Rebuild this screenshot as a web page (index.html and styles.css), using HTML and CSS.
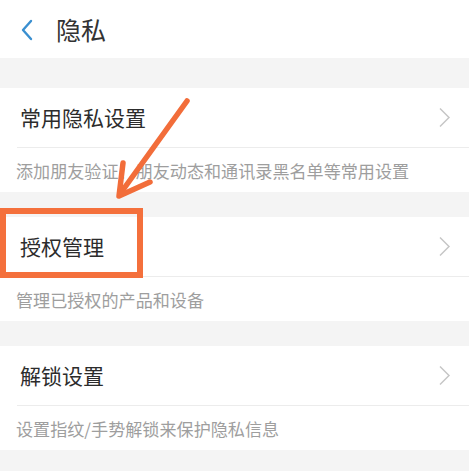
FILE: index.html
```html
<!DOCTYPE html>
<html lang="zh-CN">
<head>
<meta charset="utf-8">
<title>隐私</title>
<link rel="stylesheet" href="styles.css">
</head>
<body>
<div class="page">
  <header class="topbar">
    <svg class="back" width="14" height="22" viewBox="0 0 14 22"><polyline points="11,2 3,11 11,20" fill="none" stroke="#3a8fd0" stroke-width="2.4" stroke-linecap="round" stroke-linejoin="round"/></svg>
    <span class="title">隐私</span>
  </header>

  <section class="card first">
    <div class="row"><span class="label">常用隐私设置</span><svg class="chev" width="13" height="21" viewBox="0 0 13 21"><polyline points="2,1.5 11,10.5 2,19.5" fill="none" stroke="#c6c6c6" stroke-width="1.5"/></svg></div>
    <div class="desc">添加朋友验证、朋友动态和通讯录黑名单等常用设置</div>
  </section>

  <section class="card">
    <div class="row"><span class="label">授权管理</span><svg class="chev" width="13" height="21" viewBox="0 0 13 21"><polyline points="2,1.5 11,10.5 2,19.5" fill="none" stroke="#c6c6c6" stroke-width="1.5"/></svg></div>
    <div class="desc">管理已授权的产品和设备</div>
  </section>

  <section class="card">
    <div class="row"><span class="label">解锁设置</span><svg class="chev" width="13" height="21" viewBox="0 0 13 21"><polyline points="2,1.5 11,10.5 2,19.5" fill="none" stroke="#c6c6c6" stroke-width="1.5"/></svg></div>
    <div class="desc">设置指纹/手势解锁来保护隐私信息</div>
  </section>

  <div class="highlight"></div>
  <svg class="arrow" width="469" height="471" viewBox="0 0 469 471">
    <line x1="187" y1="101" x2="120" y2="194" stroke="#f26d3a" stroke-width="5.5" stroke-linecap="round"/>
    <polyline points="123,163 119,196 150,182" fill="none" stroke="#f26d3a" stroke-width="5.5" stroke-linecap="round" stroke-linejoin="round"/>
  </svg>
</div>
</body>
</html>
```
FILE: styles.css
```css
html, body {
  margin: 0;
  padding: 0;
  background: #f4f4f4;
}
body {
  font-family: "Noto Sans CJK SC", "Noto Sans", sans-serif;
  width: 469px;
  height: 471px;
  overflow: hidden;
}
.page {
  position: relative;
  height: 471px;
}
.topbar {
  height: 58px;
  background: #ffffff;
  display: flex;
  align-items: center;
  padding-left: 20px;
  box-sizing: border-box;
}
.back {
  display: block;
  margin-top: 1px;
}
.title {
  font-size: 25px;
  color: #333333;
  margin-left: 22px;
  line-height: 1;
}
.card {
  background: #ffffff;
  margin-top: 25px;
}
.card.first {
  margin-top: 30px;
}
.row {
  height: 59px;
  display: flex;
  align-items: center;
  justify-content: space-between;
  margin-left: 17px;
  padding: 0 18px 0 3px;
  border-bottom: 1px solid #ececec;
}
.label {
  font-size: 21px;
  color: #2c2c2c;
  line-height: 1;
}
.chev {
  display: block;
}
.desc {
  height: 44px;
  display: flex;
  align-items: center;
  padding-left: 16px;
  font-size: 17.1px;
  color: #9e9e9e;
  white-space: nowrap;
}
.highlight {
  position: absolute;
  left: 0;
  top: 208px;
  width: 143px;
  height: 70px;
  box-sizing: border-box;
  border: 6px solid #f4703c;
}
.arrow {
  position: absolute;
  left: 0;
  top: 0;
  pointer-events: none;
}
```
